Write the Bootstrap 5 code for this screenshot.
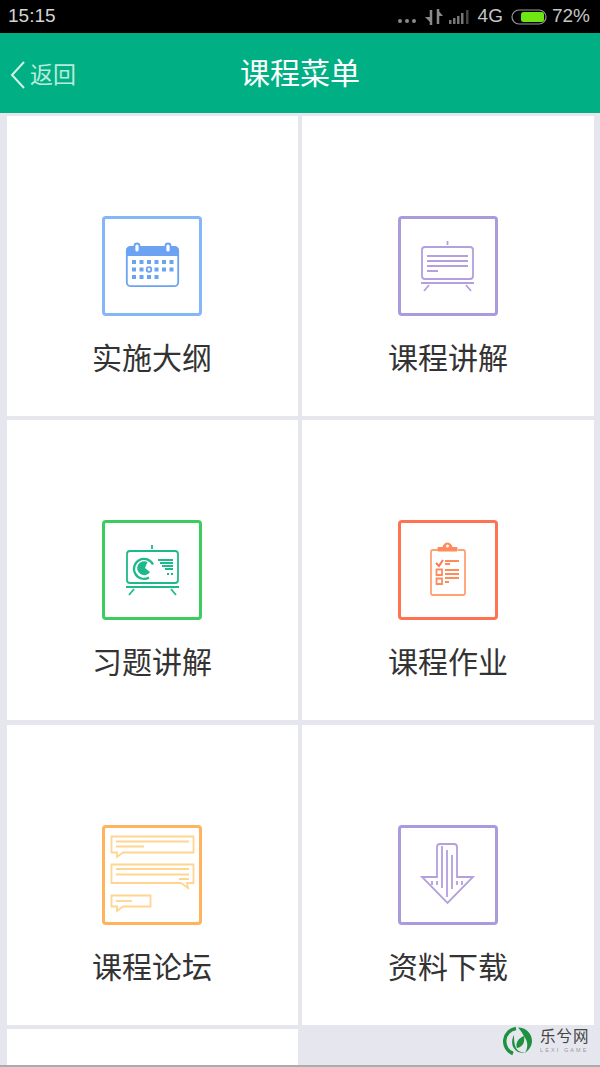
<!DOCTYPE html>
<html lang="zh">
<head>
<meta charset="utf-8">
<title>课程菜单</title>
<link rel="stylesheet" href="https://cdn.jsdelivr.net/npm/bootstrap@5.3.0/dist/css/bootstrap.min.css">
<style>
html,body{height:1067px;overflow:hidden}
body{background:#e6e7ee;font-family:"Liberation Sans","Noto Sans CJK SC",sans-serif;position:relative}
.sbar{height:33px;background:#000;color:#c6c6c6;font-size:19px;padding:0 10px 0 8px}
.clock{color:#d4d4d4;font-size:19px}
.appbar{height:80px;background:#00b084;color:#fff;position:relative}
.apptitle{font-size:30px;line-height:1;padding-top:2px}
.backlink{position:absolute;left:10px;top:27px;color:#b9ebdb;font-size:23px;line-height:30px;text-decoration:none}
.menugrid{display:grid;grid-template-columns:291px 292px;grid-auto-rows:300px;column-gap:4px;row-gap:4.3px;padding:3px 0 0 7px;height:954px;overflow:hidden}
.tile{background:#fff;color:#333;text-decoration:none;padding-top:100px}
.tile:nth-child(odd){padding-right:1px}
.tile-label{font-size:30px;line-height:36px;margin-top:25px}
.framebox{width:100px;height:100px;border:3px solid;border-radius:4px}
.framebox svg{display:block;fill:none;stroke-width:1.8}
.f-blue{border-color:#85b6f7}.f-blue svg{stroke:#6ba3f2}
.f-violet{border-color:#ab9bdc}.f-violet svg{stroke:#b49fdf}
.f-green{border-color:#3ccb5e}.f-green svg{stroke:#1eb98a}
.f-red{border-color:#ff7350}.f-red svg{stroke:#ffa173}
.f-orange{border-color:#ffb35c}.f-orange svg{stroke:#ffd591}
.brand{position:absolute;left:503px;top:1025px;color:#444}
.brand-name{font-size:15.500px;line-height:18px;letter-spacing:1px;margin-left:3px}
.brand-sub{font-size:5.500px;line-height:8px;letter-spacing:2.100px;color:#9a9a9a;margin-left:3px}
.bottomline{position:absolute;left:0;right:0;bottom:0;height:2px;background:#a6afaf}
</style>
</head>
<body>
<div class="sbar d-flex align-items-center justify-content-between">
  <span class="clock">15:15</span>
  <div class="d-flex align-items-center">
    <svg width="78" height="20" viewBox="0 0 78 20">
      <g fill="#8a8a8a"><circle cx="8" cy="14" r="2"/><circle cx="15" cy="14" r="2"/><circle cx="22" cy="14" r="2"/></g>
      <path d="M39 3v15M46 2v15" stroke="#8a8a8a" stroke-width="2.500"/>
      <path d="M33 10h6v6zM45 2v7h6z" fill="#8a8a8a"/>
      <g fill="#777"><rect x="57" y="13" width="2.500" height="4"/><rect x="61" y="11" width="2.500" height="6"/><rect x="65" y="9" width="2.500" height="8"/><rect x="69" y="6" width="2.500" height="11"/><rect x="74" y="3" width="2.500" height="14" fill="#444"/></g>
    </svg>
    <span class="ms-2">4G</span>
    <svg class="ms-2" width="37" height="18" viewBox="0 0 37 18">
      <rect x="1" y="2" width="34" height="14" rx="7" stroke="#999" stroke-width="1.200" fill="none"/>
      <rect x="10" y="4" width="23" height="10" rx="2.500" fill="#6ee614"/>
    </svg>
    <span class="ms-1">72%</span>
  </div>
</div>

<header class="appbar d-flex align-items-center justify-content-center">
  <a class="backlink d-flex align-items-center" href="#">
    <svg width="16" height="30" viewBox="0 0 16 30"><path d="M14 2 2 15l12 13" fill="none" stroke="#d2f2e8" stroke-width="2"/></svg>
    <span class="ms-1">返回</span>
  </a>
  <div class="apptitle">课程菜单</div>
</header>

<main class="menugrid">
  <a class="tile d-flex flex-column align-items-center" href="#">
    <div class="framebox f-blue">
      <svg width="94" height="94" viewBox="2 3 94 94">
        <rect x="23.800" y="30.800" width="51.400" height="39.400" rx="4"/>
        <path d="M24 39v-4a4 4 0 0 1 4-4h43a4 4 0 0 1 4 4v4z" fill="#6ba3f2"/>
        <rect x="31.500" y="27.500" width="5" height="9" rx="2.500" fill="#fff"/>
        <rect x="62.500" y="27.500" width="5" height="9" rx="2.500" fill="#fff"/>
        <g fill="#6ba3f2" stroke="none">
          <rect x="29" y="44" width="4" height="4"/><rect x="36.500" y="44" width="4" height="4"/><rect x="44" y="44" width="4" height="4"/><rect x="51.500" y="44" width="4" height="4"/><rect x="59" y="44" width="4" height="4"/><rect x="66.500" y="44" width="4" height="4"/>
          <rect x="29" y="51.500" width="4" height="4"/><rect x="36.500" y="51.500" width="4" height="4"/><rect x="51.500" y="51.500" width="4" height="4"/><rect x="59" y="51.500" width="4" height="4"/><rect x="66.500" y="51.500" width="4" height="4"/>
          <rect x="29" y="59" width="4" height="4"/><rect x="36.500" y="59" width="4" height="4"/><rect x="44" y="59" width="4" height="4"/><rect x="51.500" y="59" width="4" height="4"/>
        </g>
        <circle cx="46" cy="53.500" r="2.300"/>
      </svg>
    </div>
    <div class="tile-label">实施大纲</div>
  </a>

  <a class="tile d-flex flex-column align-items-center" href="#">
    <div class="framebox f-violet">
      <svg width="94" height="94" viewBox="3 3 94 94">
        <rect x="24" y="31" width="51" height="32" rx="3"/>
        <path d="M49.500 25v4M23 67h53M31 69l-5 6M68 69l5 6M29 40h41M29 45h41M29 50h41M29 55h11"/>
      </svg>
    </div>
    <div class="tile-label">课程讲解</div>
  </a>

  <a class="tile d-flex flex-column align-items-center" href="#">
    <div class="framebox f-green">
      <svg width="94" height="94" viewBox="2 3 94 94">
        <rect x="24" y="31" width="51" height="32" rx="3"/>
        <path d="M49 25v4M23 67h53M31 69l-5 6M68 69l5 6"/>
        <path d="M46 57.500a10 10 0 1 1 4-13" stroke-width="2.200"/>
        <path d="M44.500 42a7 7 0 1 0 2.500 10l-5-4z" fill="#1eb98a" stroke="none"/>
        <path d="M55 40h15M57 43h13M59 46h11M62 49h8"/>
        <path d="M64 54h2M68 54h2" stroke-width="2"/>
      </svg>
    </div>
    <div class="tile-label">习题讲解</div>
  </a>

  <a class="tile d-flex flex-column align-items-center" href="#">
    <div class="framebox f-red">
      <svg width="94" height="94" viewBox="3 3 94 94">
        <path d="M40 30h-5a2 2 0 0 0-2 2v41a2 2 0 0 0 2 2h30a2 2 0 0 0 2-2V32a2 2 0 0 0-2-2h-5"/>
        <path d="M40 31v-3.500h5a4.500 4.500 0 0 1 9 0h5v3.500z" fill="#ff8a5c" stroke="#ff8a5c" stroke-width="1"/>
        <circle cx="49.500" cy="26" r="1.500" fill="#fff" stroke="none"/>
        <path d="M38 43l3 3 4-6" stroke="#ff7350" stroke-width="2"/>
        <path d="M38.500 49.500h5.500v5.500h-5.500zM38.500 58.500h5.500v5.500h-5.500zM47 41h14M47 44h5M47 50h14M47 54h14M47 58h14M47 62h4" stroke="#ff8a5c"/>
      </svg>
    </div>
    <div class="tile-label">课程作业</div>
  </a>

  <a class="tile d-flex flex-column align-items-center" href="#">
    <div class="framebox f-orange">
      <svg width="94" height="94" viewBox="2 3 94 94">
        <path d="M8.500 11.500h82v16H20l-6 4.500v-4.500H8.500z"/>
        <path d="M13 16.500h73M13 21.500h28"/>
        <path d="M8.500 39.500h82v18.500H84l1 5-7-5H8.500z"/>
        <path d="M13 44h73M13 49.500h73M76 54h10"/>
        <path d="M8.500 70.500h39v11H20l-6 4.500v-4.500H8.500z"/>
        <path d="M13 76h16"/>
      </svg>
    </div>
    <div class="tile-label">课程论坛</div>
  </a>

  <a class="tile d-flex flex-column align-items-center" href="#">
    <div class="framebox f-violet">
      <svg width="94" height="94" viewBox="3 3 94 94">
        <path d="M39 52V22a3 3 0 0 1 3-3h14a3 3 0 0 1 3 3v30h16L49.500 78 24 52z"/>
        <path d="M44 21v42M49 25v47M54 30v34M34 56v4M39 56v4M59 56v4M64 56v4"/>
      </svg>
    </div>
    <div class="tile-label">资料下载</div>
  </a>

  <div class="tile"></div>
</main>

<div class="brand d-flex align-items-center">
  <svg width="30" height="32" viewBox="0 0 30 32">
    <path d="M13 3.500a13 13 0 0 0-3 25" fill="none" stroke="#1e9140" stroke-width="3.500"/>
    <path d="M15 2.500c8 0 14 6 14 13.500 0 5-3 9-7 12 3-5 3-11 0-15-2-4-4-7-7-10.500z" fill="#1e9140"/>
    <path d="M11 10c-3 5-3 13 4 17 3 1 6 1 8 0-4 1-8 0-10-4-2-4-2-9-2-13z" fill="#1e9140"/>
    <path d="M21 11c1 6-1 11-7 12-2-4 1-10 7-12z" fill="#1e9140"/>
  </svg>
  <div class="ms-1">
    <div class="brand-name">乐兮网</div>
    <div class="brand-sub">LEXI GAME</div>
  </div>
</div>
<div class="bottomline"></div>
<script src="https://cdn.jsdelivr.net/npm/bootstrap@5.3.0/dist/js/bootstrap.bundle.min.js"></script>
</body>
</html>
